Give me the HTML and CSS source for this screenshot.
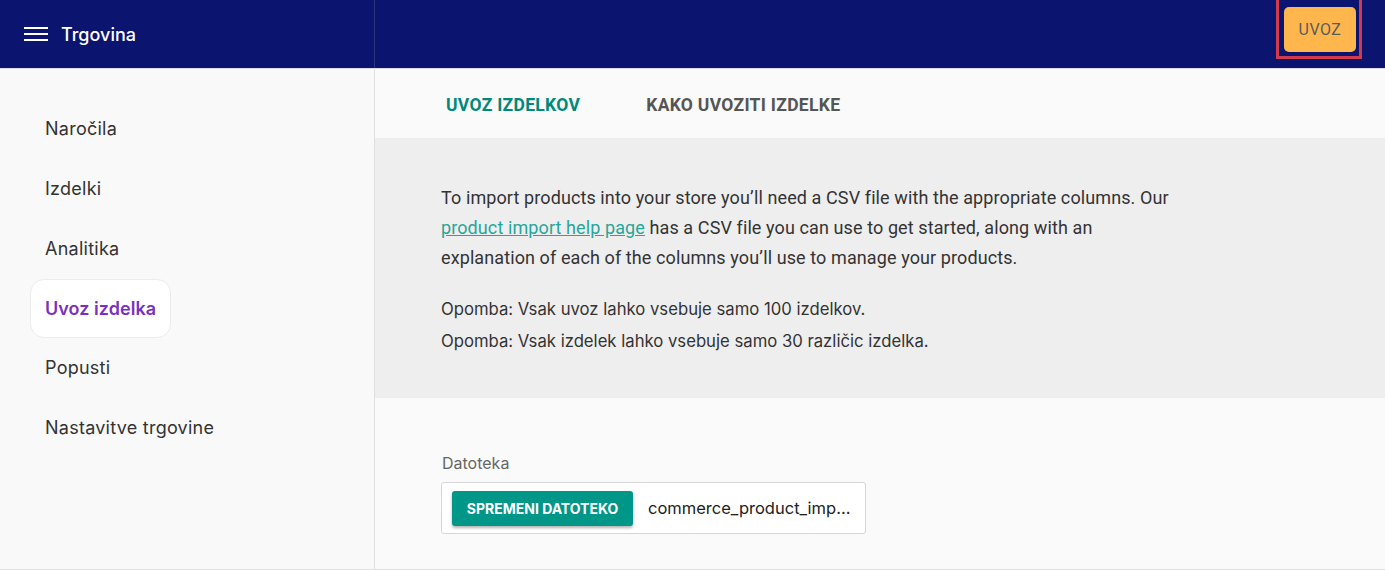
FILE: index.html
```html
<!DOCTYPE html>
<html lang="sl">
<head>
<meta charset="utf-8">
<title>Trgovina</title>
<link rel="stylesheet" href="styles.css">
</head>
<body>
<header class="topbar">
  <div class="brand">
    <svg class="burger" width="24" height="16" viewBox="0 0 24 16"><rect x="0" y="1" width="24" height="2" fill="#fff"/><rect x="0" y="7" width="24" height="2" fill="#fff"/><rect x="0" y="13" width="24" height="2" fill="#fff"/></svg>
    <span class="brand-title">Trgovina</span>
  </div>
  <div class="topbar-main">
    <div class="highlight"><button class="btn-uvoz">UVOZ</button></div>
  </div>
</header>
<div class="layout">
  <nav class="sidebar">
    <a class="nav-item">Naročila</a>
    <a class="nav-item">Izdelki</a>
    <a class="nav-item">Analitika</a>
    <a class="nav-item active">Uvoz izdelka</a>
    <a class="nav-item">Popusti</a>
    <a class="nav-item">Nastavitve trgovine</a>
  </nav>
  <main class="content">
    <div class="tabs">
      <span class="tab active">UVOZ IZDELKOV</span>
      <span class="tab">KAKO UVOZITI IZDELKE</span>
    </div>
    <section class="info">
      <p class="intro">To import products into your store you’ll need a CSV file with the appropriate columns. Our <a class="link">product import help page</a> has a CSV file you can use to get started, along with an explanation of each of the columns you’ll use to manage your products.</p>
      <p class="notes">Opomba: Vsak uvoz lahko vsebuje samo 100 izdelkov.<br>Opomba: Vsak izdelek lahko vsebuje samo 30 različic izdelka.</p>
    </section>
    <section class="form">
      <div class="label">Datoteka</div>
      <div class="file-box">
        <button class="file-btn">SPREMENI DATOTEKO</button>
        <span class="file-name">commerce_product_import.csv</span>
      </div>
    </section>
  </main>
</div>
</body>
</html>
```
FILE: styles.css
```css
* { box-sizing: border-box; }
html, body { margin: 0; padding: 0; }
body {
  width: 1385px;
  height: 570px;
  overflow: hidden;
  background: #fafafa;
  font-family: Inter, "Noto Sans", sans-serif;
  color: #333;
  border-bottom: 1px solid #e0e0e0;
}
.topbar {
  display: flex;
  height: 69px;
  background: #0b1570;
  border-bottom: 1px solid #dcdde6;
}
.brand {
  width: 375px;
  display: flex;
  align-items: center;
  padding-left: 24px;
  gap: 13px;
  border-right: 1px solid #2b357f;
}
.burger { display: block; }
.brand-title {
  color: #fff;
  font-size: 18px;
  font-weight: 500;
}
.topbar-main {
  flex: 1;
  display: flex;
  justify-content: flex-end;
  align-items: flex-start;
  padding-right: 23px;
}
.highlight {
  border: 3px solid #d23a4d;
  border-top-width: 0;
  padding: 7px 5px 5px 5px;
  width: 86px;
  height: 59px;
}
.btn-uvoz {
  width: 72px;
  height: 45px;
  border: 0;
  border-radius: 5px;
  background: #ffb74d;
  color: #5b5b5b;
  font-family: Roboto, sans-serif;
  font-size: 16px;
  letter-spacing: 0.5px;
  padding: 0;
}
.layout {
  display: flex;
  height: 500px;
}
.sidebar {
  width: 375px;
  border-right: 1px solid #e0e0e0;
  padding: 30px 0 0 30px;
  display: flex;
  flex-direction: column;
  align-items: flex-start;
  background: #f9f9f9;
}
.nav-item {
  display: block;
  height: 60px;
  line-height: 58px;
  padding: 0 14px;
  font-size: 18px;
  letter-spacing: 0.25px;
  color: #333;
  border: 1px solid transparent;
  border-radius: 14px;
}
.nav-item.active {
  background: #fff;
  border-color: #ececec;
  color: #7b2fbe;
  font-weight: 600;
  letter-spacing: 0.05px;
  height: 59px;
}
.content {
  flex: 1;
  display: flex;
  flex-direction: column;
}
.tabs {
  height: 69px;
  display: flex;
  align-items: center;
  padding-left: 71px;
  gap: 66px;
  padding-top: 3px;
}
.tab {
  font-family: Roboto, sans-serif;
  font-weight: 700;
  font-size: 17.5px;
  color: #555;
  letter-spacing: 0.3px;
}
.tab.active { color: #00897b; }
.info {
  background: #eeeeee;
  height: 260px;
  padding: 45px 60px 0 66px;
}
.intro {
  margin: 0;
  font-family: Roboto, sans-serif;
  font-size: 18px;
  letter-spacing: 0.1px;
  line-height: 30px;
  color: #333;
  max-width: 738px;
}
.link {
  color: #26a69a;
  text-decoration: underline;
}
.notes {
  margin: 20px 0 0 0;
  font-size: 16.7px;
  line-height: 32px;
  color: #333;
}
.form {
  padding: 55px 0 0 66px;
}
.label {
  font-size: 16px;
  color: #666;
  margin-bottom: 9px;
  padding-left: 1px;
}
.file-box {
  width: 425px;
  height: 52px;
  background: #fff;
  border: 1px solid #d6d6d6;
  border-radius: 3px;
  display: flex;
  align-items: center;
  padding: 0 14px 0 10px;
  gap: 15px;
}
.file-btn {
  flex: none;
  width: 181px;
  height: 35px;
  background: #009688;
  color: #fff;
  border: 0;
  border-radius: 3px;
  font-family: Inter, sans-serif;
  font-weight: 700;
  font-size: 14px;
  box-shadow: 0 2px 3px rgba(0,0,0,0.3);
  padding: 0;
}
.file-name {
  flex: 1;
  min-width: 0;
  white-space: nowrap;
  overflow: hidden;
  text-overflow: ellipsis;
  font-size: 16.5px;
  color: #222;
}
```
